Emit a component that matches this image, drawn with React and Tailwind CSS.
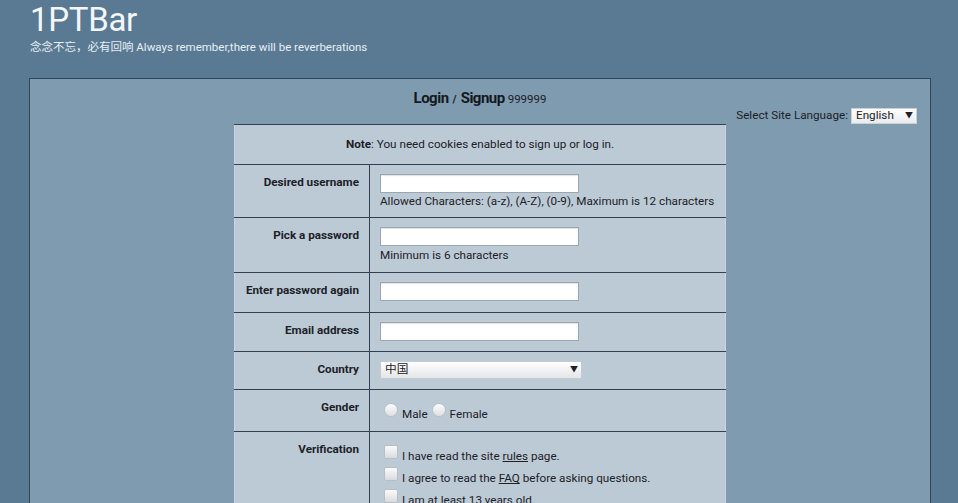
const labelCls =
  "w-[135px] border-r border-[#2f4152] text-right align-top pt-[10px] pr-[10px] font-bold leading-[14px]";
const valueCls = "align-top pl-[10px] pt-[9px] pb-[10px]";
const rowCls = "border-t border-[#2f4152]";

const TextInput = ({ type = "text" }) => (
  <input
    type={type}
    className="block h-[19px] w-[199px] border border-[#9aa6b0] bg-white shadow-[inset_0_1px_1px_rgba(0,0,0,0.12)] outline-none"
  />
);

const Radio = ({ label }) => (
  <label className="flex items-end mr-[4px]">
    <span className="mb-[4px] mr-[4px] h-[14px] w-[14px] rounded-full border border-[#b7bec4] bg-gradient-to-b from-[#fdfdfd] to-[#dcdfe2]" />
    <span className="leading-[14px]">{label}</span>
  </label>
);

const Check = ({ children }) => (
  <div className="flex items-end h-[22px]">
    <span className="mb-[4px] mr-[4px] h-[14px] w-[14px] rounded-[2px] border border-[#b7bec4] bg-gradient-to-b from-[#fbfbfb] to-[#d8dbde]" />
    <span className="leading-[14px]">{children}</span>
  </div>
);

export default function App() {
  return (
    <div className="min-h-screen bg-[#5a7a94] font-['Roboto','Noto_Sans_CJK_SC',sans-serif] text-[11.7px] text-[#1d2126]">
      {/* header */}
      <div className="px-[30px] pt-[1px]">
        <h1 className="text-[33px] leading-[38px] text-[#f3f7fa] tracking-[-0.3px]">1PTBar</h1>
        <p className="mt-[1px] text-[11.5px] leading-[14px] text-[#e8eef3]">
          念念不忘，必有回响 Always remember,there will be reverberations
        </p>
      </div>

      {/* main panel */}
      <div className="ml-[29px] mt-[24px] w-[902px] border-l border-t border-r border-[#2e455a] bg-[#7f9bb0] pb-[40px]">
        <div className="flex h-[29px] items-baseline justify-center pt-[9px] leading-[20px]">
          <span className="text-[15px] font-bold tracking-[-0.5px] text-[#14191e]">Login</span>
          <span className="mx-[4px] text-[11px] font-bold">/</span>
          <span className="text-[15px] font-bold tracking-[-0.5px] text-[#14191e]">Signup</span>
          <span className="ml-[3px] text-[11.5px]">999999</span>
        </div>

        <div className="flex justify-end items-center h-[16px] pr-[13px]">
          <span className="mr-[3px]">Select Site Language:</span>
          <div className="flex h-[16px] w-[66px] items-center justify-between border border-[#c9d0d6] bg-gradient-to-b from-white to-[#e9ebed] pl-[4px] pr-[3px]">
            <span>English</span>
            <span className="text-[8px]">▼</span>
          </div>
        </div>

        <table className="mx-auto w-[492px] border-collapse bg-[#bccad6] border-l border-r border-[#c9d4dd]">
          <tbody>
            <tr className="border-t border-[#2f4152]">
              <td colSpan={2} className="h-[40px] text-center">
                <b>Note</b>: You need cookies enabled to sign up or log in.
              </td>
            </tr>
            <tr className={rowCls}>
              <td className={labelCls}>Desired username</td>
              <td className="align-top pl-[10px] pt-[9px] pb-[9px]">
                <TextInput />
                <div className="mt-[1px] leading-[14px]">
                  Allowed Characters: (a-z), (A-Z), (0-9), Maximum is 12 characters
                </div>
              </td>
            </tr>
            <tr className={rowCls}>
              <td className={labelCls}>Pick a password</td>
              <td className="align-top pl-[10px] pt-[9px] pb-[10px]">
                <TextInput type="password" />
                <div className="leading-[14px] mt-[2px]">Minimum is 6 characters</div>
              </td>
            </tr>
            <tr className={rowCls}>
              <td className={labelCls}>Enter password again</td>
              <td className="align-top pl-[10px] pt-[9px] pb-[11px]">
                <TextInput type="password" />
              </td>
            </tr>
            <tr className={rowCls}>
              <td className={labelCls}>Email address</td>
              <td className={valueCls}>
                <TextInput />
              </td>
            </tr>
            <tr className={rowCls}>
              <td className={labelCls}>Country</td>
              <td className={valueCls}>
                <div className="flex h-[18px] w-[202px] items-center justify-between border border-[#c3cad0] bg-gradient-to-b from-white to-[#e3e5e7] pl-[4px] pr-[3px]">
                  <span>中国</span>
                  <span className="text-[8px]">▼</span>
                </div>
              </td>
            </tr>
            <tr className={rowCls}>
              <td className={labelCls}>Gender</td>
              <td className="align-top pl-[14px] pt-[11px] pb-[10px]">
                <div className="flex h-[20px] items-end">
                  <Radio label="Male" />
                  <Radio label="Female" />
                </div>
              </td>
            </tr>
            <tr className={rowCls}>
              <td className={labelCls}>Verification</td>
              <td className="align-top pl-[14px] pt-[9px] pb-[10px]">
                <Check>
                  I have read the site <span className="underline">rules</span> page.
                </Check>
                <Check>
                  I agree to read the <span className="underline">FAQ</span> before asking questions.
                </Check>
                <Check>I am at least 13 years old.</Check>
              </td>
            </tr>
          </tbody>
        </table>
      </div>
    </div>
  );
}
